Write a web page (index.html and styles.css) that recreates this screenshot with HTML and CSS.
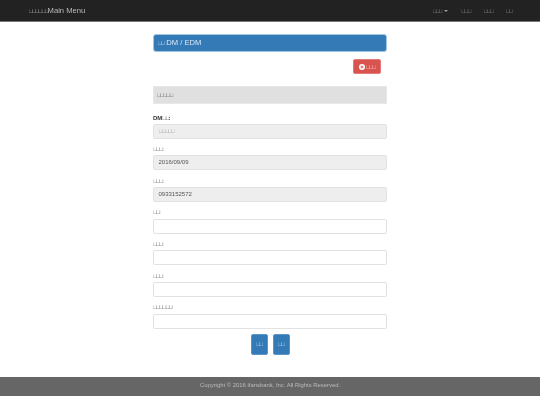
FILE: index.html
```html
<!DOCTYPE html>
<html lang="zh-Hant">
<head>
<meta charset="utf-8">
<title>DM / EDM</title>
<link rel="stylesheet" href="styles.css">
</head>
<body>
<nav class="navbar">
  <a class="brand"><span class="tofu">&#xE000;&#xE000;&#xE000;&#xE000;&#xE000;&#xE000;</span>Main Menu</a>
  <ul class="nav">
    <li><span class="tofu">&#xE000;&#xE000;&#xE000;</span><i class="caret"></i></li>
    <li><span class="tofu">&#xE000;&#xE000;&#xE000;</span></li>
    <li><span class="tofu">&#xE000;&#xE000;&#xE000;</span></li>
    <li><span class="tofu">&#xE000;&#xE000;</span></li>
  </ul>
</nav>
<main class="container">
  <h1 class="title"><span class="tofu">&#xE000;&#xE000;</span> DM / EDM</h1>
  <div class="actions">
    <a class="btn-danger">
      <svg class="plus" viewBox="0 0 16 16"><circle cx="8" cy="8" r="8" fill="#fff"/><path d="M8 4v8M4 8h8" stroke="#d9534f" stroke-width="2.6"/></svg>
      <span class="tofu">&#xE000;&#xE000;&#xE000;</span>
    </a>
  </div>
  <div class="section"><span class="tofu">&#xE000;&#xE000;&#xE000;&#xE000;&#xE000;</span></div>
  <form class="form">
    <div class="field">
      <label class="strong">DM<span class="tofu">&#xE000;&#xE000;</span>:</label>
      <div class="input disabled"><span class="tofu faint">&#xE000;&#xE000;&#xE000;&#xE000;&#xE000;</span></div>
    </div>
    <div class="field">
      <label><span class="tofu">&#xE000;&#xE000;&#xE000;</span>:</label>
      <div class="input disabled">2016/09/09</div>
    </div>
    <div class="field">
      <label><span class="tofu">&#xE000;&#xE000;&#xE000;</span>:</label>
      <div class="input disabled">0933152572</div>
    </div>
    <div class="field">
      <label><span class="tofu">&#xE000;&#xE000;</span>:</label>
      <div class="input"></div>
    </div>
    <div class="field">
      <label><span class="tofu">&#xE000;&#xE000;&#xE000;</span>:</label>
      <div class="input"></div>
    </div>
    <div class="field">
      <label><span class="tofu">&#xE000;&#xE000;&#xE000;</span>:</label>
      <div class="input"></div>
    </div>
    <div class="field">
      <label><span class="tofu">&#xE000;&#xE000;&#xE000;&#xE000;&#xE000;&#xE000;</span>:</label>
      <div class="input"></div>
    </div>
    <div class="buttons">
      <a class="btn-primary"><span class="tofu">&#xE000;&#xE000;</span></a>
      <a class="btn-primary"><span class="tofu">&#xE000;&#xE000;</span></a>
    </div>
  </form>
</main>
<footer class="footer">Copyright © 2016 ifansbank, Inc. All Rights Reserved.</footer>
</body>
</html>
```
FILE: styles.css
```css
* { box-sizing: border-box; }
html, body { margin: 0; padding: 0; background: #fff; }
body { height: 405px; overflow: hidden; font-family: "Liberation Sans", Arial, sans-serif; font-size: 6px; line-height: 10px; color: #333; filter: blur(0.3px); }
.tofu { font-family: "Liberation Sans", sans-serif; font-size: 5.6px; letter-spacing: -1.1px; font-weight: normal; }
.faint { color: #999; }

.navbar { height: 22px; background: #222; border-bottom: 1px solid #777; display: flex; align-items: center; justify-content: space-between; padding: 0 28px 0 29px; }
.brand { font-size: 7.6px; color: #bbb; }
.nav { display: flex; gap: 13px; list-style: none; margin: 0; padding: 0; color: #9d9d9d; font-size: 6px; }
.nav li { display: flex; align-items: center; }
.caret { width: 0; height: 0; margin-left: 2.5px; border-top: 2px solid #9d9d9d; border-left: 2px solid transparent; border-right: 2px solid transparent; }

.container { width: 234px; margin: 12px auto 0; }
.title { margin: 0; height: 17.5px; background: #337ab7; border: 1px solid #a3c6e4; border-radius: 3px; padding-left: 4px; color: #dfe9f3; font-size: 7.6px; font-weight: normal; line-height: 15.5px; }
.actions { display: flex; justify-content: flex-end; padding: 7.5px 6px 0 0; }
.btn-danger { width: 28px; height: 15px; background: #d9534f; border: 1px solid #e27a77; border-radius: 2px; color: #f5d5d4; font-size: 5px; display: flex; align-items: center; justify-content: center; gap: 1px; }
.plus { width: 6px; height: 6px; }
.section { height: 18.5px; margin-top: 11.5px; background: #e0e0e0; border: 1px solid #e8e8e8; padding-left: 3px; font-size: 6px; line-height: 17px; color: #555; }

.form { margin-top: 6px; }
.field { height: 31.67px; padding-top: 3.5px; }
label { display: block; height: 9px; line-height: 9px; font-size: 6px; color: #555; margin-bottom: 1.2px; }
label.strong { font-weight: bold; color: #333; }
.input { height: 15px; border: 1px solid #e2e2e2; border-radius: 2px; background: #fff; padding-left: 4.5px; font-size: 6px; line-height: 13.5px; color: #555; }
.input.disabled { background: #eee; }

.buttons { display: flex; justify-content: center; gap: 5px; margin-top: 2px; }
.btn-primary { width: 17px; height: 21px; background: #337ab7; border: 1px solid #5a94c8; border-radius: 2px; color: #cfe0ef; font-size: 5.5px; display: flex; align-items: center; justify-content: center; }

.footer { height: 19.5px; margin-top: 22px; background: #666; color: #bbb; font-size: 5.9px; line-height: 17px; text-align: center; }
```
